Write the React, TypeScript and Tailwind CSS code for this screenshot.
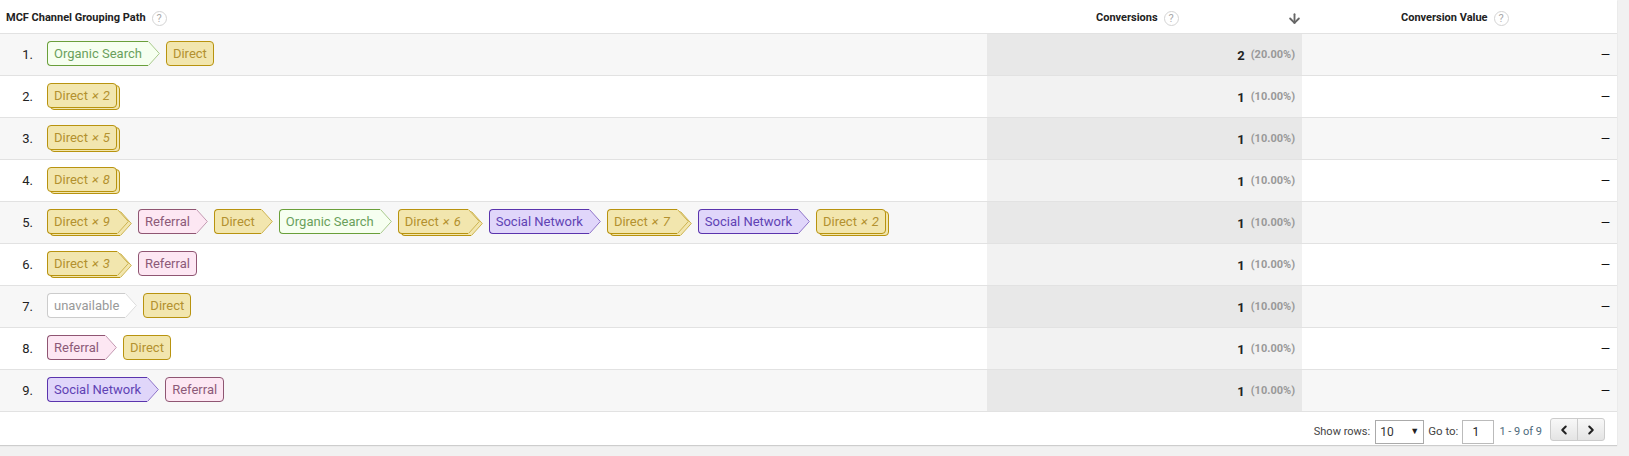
import React from "react";
import { ArrowDown, ChevronLeft, ChevronRight } from "lucide-react";

type Kind = "direct" | "organic" | "referral" | "social" | "none";
const styles: Record<Kind, { box: string; text: string; fill: string; edge: string; arrow: string }> = {
  direct: { box: "bg-[#f2e6ae] border-[#b8930f]", text: "text-[#b3912f]", fill: "#f2e6ae", edge: "#b8930f", arrow: "#cdb452" },
  organic: { box: "bg-[#f6fff0] border-[#6a9f3a]", text: "text-[#6a9f5c]", fill: "#f6fff0", edge: "#6a9f3a", arrow: "#a9c98c" },
  referral: { box: "bg-[#fde7f3] border-[#8f5572]", text: "text-[#8c5a78]", fill: "#fde7f3", edge: "#8f5572", arrow: "#c49ab2" },
  social: { box: "bg-[#e0d6fa] border-[#5a34ad]", text: "text-[#5f42b4]", fill: "#e0d6fa", edge: "#5a34ad", arrow: "#8f74c9" },
  none: { box: "bg-white border-[#cccccc]", text: "text-[#999999]", fill: "#ffffff", edge: "#cccccc", arrow: "#dddddd" },
};

function Tip({ kind }: { kind: Kind }) {
  const s = styles[kind];
  return (
    <svg width="12" height="25" viewBox="0 0 12 25" className="shrink-0 block">
      <path d="M0 .5H.5L11.3 12.5L.5 24.5H0Z" fill={s.fill} />
      <path d="M.5 .5L11.3 12.5L.5 24.5" fill="none" stroke={s.arrow} />
    </svg>
  );
}

function Chip({ kind, label, count, arrow }: { kind: Kind; label: string; count?: number; arrow?: boolean }) {
  const s = styles[kind];
  const stacked = count !== undefined;
  return (
    <div className={`relative flex h-[25px] shrink-0 ${stacked ? (arrow ? "mr-[3px]" : "mr-[4px]") : ""}`}>
      {stacked && (
        <div className="absolute left-[3px] top-[2px] -right-[3px] h-[25px] flex">
          {arrow ? (
            <>
              <div className={`flex-1 border-l border-t border-b rounded-l-[4px] ${s.box}`} />
              <Tip kind={kind} />
            </>
          ) : (
            <div className={`flex-1 border rounded-[4px] ${s.box}`} />
          )}
        </div>
      )}
      <div
        className={`relative flex items-center h-[25px] pl-[6px] border ${s.box} ${
          arrow ? `border-r-0 rounded-l-[4px] ${stacked ? "pr-[7px]" : "pr-[6px]"}` : "rounded-[4px] pr-[6px]"
        } ${s.text} text-[13px] leading-none whitespace-nowrap`}
      >
        {label}
        {stacked && <i className="ml-[4px] [word-spacing:1px]">× {count}</i>}
      </div>
      {arrow && (
        <div className="relative">
          <Tip kind={kind} />
        </div>
      )}
    </div>
  );
}

type C = [Kind, string, number?];
const D: C = ["direct", "Direct"];
const O: C = ["organic", "Organic Search"];
const R: C = ["referral", "Referral"];
const S: C = ["social", "Social Network"];
const U: C = ["none", "unavailable"];
const dx = (n: number): C => ["direct", "Direct", n];

const rows: { path: C[]; value: string; pct: string }[] = [
  { path: [O, D], value: "2", pct: "(20.00%)" },
  { path: [dx(2)], value: "1", pct: "(10.00%)" },
  { path: [dx(5)], value: "1", pct: "(10.00%)" },
  { path: [dx(8)], value: "1", pct: "(10.00%)" },
  { path: [dx(9), R, D, O, dx(6), S, dx(7), S, dx(2)], value: "1", pct: "(10.00%)" },
  { path: [dx(3), R], value: "1", pct: "(10.00%)" },
  { path: [U, D], value: "1", pct: "(10.00%)" },
  { path: [R, D], value: "1", pct: "(10.00%)" },
  { path: [S, R], value: "1", pct: "(10.00%)" },
];

function Help() {
  return (
    <span className="ml-[6px] flex h-[15px] w-[15px] items-center justify-center rounded-full border border-[#d4d4d4] text-[11px] font-normal leading-none text-[#aaaaaa]">
      ?
    </span>
  );
}

export default function App() {
  return (
    <div className="h-[456px] w-[1629px] overflow-hidden bg-[#f1f1f1] font-['Roboto',sans-serif] text-[#222222]">
      <div className="w-[1617px] bg-white shadow-[0_1px_1px_rgba(0,0,0,0.15)]">
        <div className="flex h-[34px] items-center border-b border-[#e2e2e2] pt-[3px] text-[11px] font-bold text-[#222222]">
          <div className="flex w-[987px] items-center pl-[6px]">
            MCF Channel Grouping Path
            <Help />
          </div>
          <div className="flex w-[315px] items-center pl-[109px]">
            Conversions
            <Help />
            <ArrowDown size={15} strokeWidth={3} className="ml-[108px] text-[#666666]" />
          </div>
          <div className="flex flex-1 items-center pl-[99px]">
            Conversion Value
            <Help />
          </div>
        </div>
        {rows.map((r, i) => (
          <div
            key={i}
            className={`flex h-[42px] border-b border-[#e2e2e2] ${i % 2 === 0 ? "bg-[#f7f7f7]" : "bg-white"}`}
          >
            <div className="flex w-[987px] items-center">
              <span className="w-[33px] pt-[1px] text-right text-[13px]">{i + 1}.</span>
              <div className="ml-[14px] flex items-center gap-[6px] pb-[3px]">
                {r.path.map((c, j) => (
                  <Chip key={j} kind={c[0]} label={c[1]} count={c[2]} arrow={j < r.path.length - 1} />
                ))}
              </div>
            </div>
            <div
              className={`flex w-[315px] items-center justify-end pr-[7px] pt-[2px] ${
                i % 2 === 0 ? "bg-[#e8e8e8]" : "bg-[#f2f2f2]"
              }`}
            >
              <span className="text-[13px] font-bold text-[#222222]">{r.value}</span>
              <span className="ml-[6px] text-[11px] font-bold text-[#999999]">{r.pct}</span>
            </div>
            <div className="flex flex-1 items-center justify-end pr-[7px] text-[12px] text-[#111111]">—</div>
          </div>
        ))}
        <div className="flex h-[33px] items-center justify-end pt-[7px] pr-[12px] text-[11.5px] text-[#444444]">
          <span className="text-[11px]">Show rows:</span>
          <div className="ml-[5px] flex h-[24px] w-[49px] shrink-0 items-center justify-between border border-[#aaaaaa] bg-white pl-[4px] pr-[4px] text-[12px] text-[#333333]">
            <span>10</span>
            <span className="text-[9px] text-[#222222]">▼</span>
          </div>
          <span className="ml-[4px]">Go to:</span>
          <div className="ml-[4px] flex h-[24px] w-[32px] shrink-0 items-center border border-[#bbbbbb] bg-white pl-[9px] text-[12px] text-[#222222]">
            1
          </div>
          <span className="ml-[5px] text-[11px] text-[#4d6a7c]">1 - 9 of 9</span>
          <div className="mb-[5px] ml-[8px] flex h-[23px] w-[55px] shrink-0 rounded-[3px] border border-[#cccccc] bg-gradient-to-b from-[#f8f8f8] to-[#e4e4e4]">
            <div className="flex flex-1 items-center justify-center border-r border-[#cccccc]">
              <ChevronLeft size={14} strokeWidth={3.5} className="text-[#222222]" />
            </div>
            <div className="flex flex-1 items-center justify-center">
              <ChevronRight size={14} strokeWidth={3.5} className="text-[#222222]" />
            </div>
          </div>
        </div>
      </div>
    </div>
  );
}
